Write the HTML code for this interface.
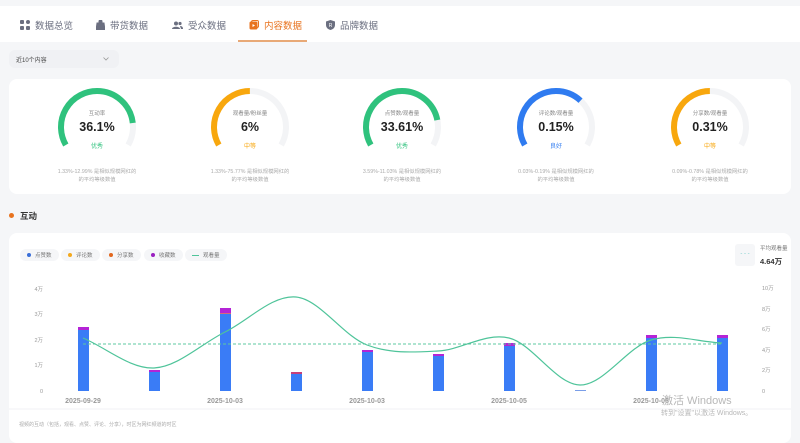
<!DOCTYPE html>
<html><head><meta charset="utf-8"><style>
*{margin:0;padding:0;box-sizing:border-box}
body{width:800px;height:435px;overflow:hidden;background:#f5f6f8;font-family:"Liberation Sans","Noto Sans CJK SC",sans-serif;position:relative;color:#333}
.abs{position:absolute}
.tabs{position:absolute;left:0;top:6px;width:800px;height:36px;background:#fff}
.tab{position:absolute;top:12px;font-size:9.5px;color:#6b6f80;display:flex;align-items:center;gap:5px}
.tab.on{color:#e8731f}
.card{position:absolute;background:#fff;border-radius:8px}
.g{position:absolute;width:120px;text-align:center}
.lbl{font-size:5.5px;color:#888}
.val{font-size:12.5px;font-weight:bold;color:#222;margin-top:3px}
.gr{font-size:6px;margin-top:7px}
.desc{position:absolute;width:140px;text-align:center;font-size:5.3px;color:#aaa;line-height:7.5px}
.leg{position:absolute;top:249px;height:12px;background:#f5f6f8;border-radius:6px;font-size:5.5px;color:#777;display:flex;align-items:center;padding:0 7px;gap:4px}
.dot{width:4px;height:4px;border-radius:50%}
</style></head><body>
<div class="tabs">
 <div class="tab" style="left:20px"><svg width="10" height="10" viewBox="0 0 10 10"><rect x="0" y="0" width="4" height="4" rx="1" fill="#6b6f80"/><rect x="6" y="0" width="4" height="4" rx="2" fill="#6b6f80"/><rect x="0" y="6" width="4" height="4" rx="1" fill="#6b6f80"/><rect x="6" y="6" width="4" height="4" rx="1" fill="#6b6f80"/></svg>数据总览</div>
 <div class="tab" style="left:96px"><svg width="9" height="10" viewBox="0 0 9 10"><path d="M1 3h7l1 7H0z M3 3V1.5a1.5 1.5 0 013 0V3" fill="#6b6f80" stroke="#6b6f80"/></svg>带货数据</div>
 <div class="tab" style="left:172px"><svg width="11" height="9" viewBox="0 0 11 9"><circle cx="4" cy="2.5" r="2" fill="#6b6f80"/><path d="M0 8c0-3 8-3 8 0z" fill="#6b6f80"/><circle cx="8" cy="2.5" r="1.6" fill="#6b6f80"/><path d="M8 5c2 0 3 1 3 3H9z" fill="#6b6f80"/></svg>受众数据</div>
 <div class="tab on" style="left:249px"><svg width="10" height="10" viewBox="0 0 10 10"><rect x="0.5" y="1.5" width="8" height="8" rx="1.5" fill="#e8731f"/><rect x="2.5" y="0.5" width="7" height="7" rx="1.5" fill="none" stroke="#e8731f"/><path d="M3.5 4v3l2.5-1.5z" fill="#fff"/></svg>内容数据</div>
 <div class="tab" style="left:326px"><svg width="9" height="10" viewBox="0 0 9 10"><path d="M4.5 0L9 1.5V5c0 3-2.5 4.5-4.5 5C2.5 9.5 0 8 0 5V1.5z" fill="#6b6f80"/><text x="4.5" y="7" font-size="5" fill="#fff" text-anchor="middle" font-family="Liberation Sans">R</text></svg>品牌数据</div>
 <div class="abs" style="left:238px;top:34px;width:69px;height:1.5px;background:#e8a977"></div>
</div>
<div class="abs" style="left:9px;top:50px;width:110px;height:18px;background:#f0f1f4;border-radius:6px;font-size:6px;color:#444;padding:5px 7px">近10个内容
<svg style="position:absolute;right:10px;top:7px" width="6" height="4" viewBox="0 0 6 4"><path d="M0.5 0.5L3 3l2.5-2.5" fill="none" stroke="#999" stroke-width="0.8"/></svg></div>

<div class="card" style="left:9px;top:79px;width:782px;height:115px"></div>
<svg class="abs" style="left:0;top:0" width="800" height="200">
 <g fill="none" stroke-width="6">
  <path d="M65.8 145 A36 36 0 1 1 128.2 145" stroke="#f3f4f6"/>
  <path d="M65.8 145 A36 36 0 1 1 128.2 145" stroke="#2fc27d" pathLength="100" stroke-dasharray="85 100"/>
  <path d="M218.8 145 A36 36 0 1 1 281.2 145" stroke="#f3f4f6"/>
  <path d="M218.8 145 A36 36 0 1 1 281.2 145" stroke="#f8a70d" pathLength="100" stroke-dasharray="50 100"/>
  <path d="M370.8 145 A36 36 0 1 1 433.2 145" stroke="#f3f4f6"/>
  <path d="M370.8 145 A36 36 0 1 1 433.2 145" stroke="#2fc27d" pathLength="100" stroke-dasharray="83 100"/>
  <path d="M524.8 145 A36 36 0 1 1 587.2 145" stroke="#f3f4f6"/>
  <path d="M524.8 145 A36 36 0 1 1 587.2 145" stroke="#2f7bf0" pathLength="100" stroke-dasharray="68 100"/>
  <path d="M678.8 145 A36 36 0 1 1 741.2 145" stroke="#f3f4f6"/>
  <path d="M678.8 145 A36 36 0 1 1 741.2 145" stroke="#f8a70d" pathLength="100" stroke-dasharray="50 100"/>
 </g>
</svg>
<div class="g" style="left:37px;top:109px"><div class="lbl">互动率</div><div class="val">36.1%</div><div class="gr" style="color:#2fc27d">优秀</div></div>
<div class="g" style="left:190px;top:109px"><div class="lbl">观看量/粉丝量</div><div class="val">6%</div><div class="gr" style="color:#f8a70d">中等</div></div>
<div class="g" style="left:342px;top:109px"><div class="lbl">点赞数/观看量</div><div class="val">33.61%</div><div class="gr" style="color:#2fc27d">优秀</div></div>
<div class="g" style="left:496px;top:109px"><div class="lbl">评论数/观看量</div><div class="val">0.15%</div><div class="gr" style="color:#2f7bf0">良好</div></div>
<div class="g" style="left:650px;top:109px"><div class="lbl">分享数/观看量</div><div class="val">0.31%</div><div class="gr" style="color:#f8a70d">中等</div></div>
<div class="desc" style="left:27px;top:169px">1.33%-12.99% 是相似规模网红的<br>的平均等级数值</div>
<div class="desc" style="left:180px;top:169px">1.33%-75.77% 是相似规模网红的<br>的平均等级数值</div>
<div class="desc" style="left:332px;top:169px">3.59%-11.03% 是相似规模网红的<br>的平均等级数值</div>
<div class="desc" style="left:486px;top:169px">0.03%-0.19% 是相似规模网红的<br>的平均等级数值</div>
<div class="desc" style="left:640px;top:169px">0.09%-0.78% 是相似规模网红的<br>的平均等级数值</div>

<div class="abs" style="left:9px;top:213px;width:5px;height:5px;border-radius:50%;background:#e8731f"></div>
<div class="abs" style="left:20px;top:210px;font-size:8.5px;font-weight:bold;color:#333">互动</div>

<div class="card" style="left:9px;top:233px;width:782px;height:210px"></div>
<div class="leg" style="left:20px"><span class="dot" style="background:#3a6fd8"></span>点赞数</div>
<div class="leg" style="left:61px"><span class="dot" style="background:#f3a81d"></span>评论数</div>
<div class="leg" style="left:102px"><span class="dot" style="background:#e2681f"></span>分享数</div>
<div class="leg" style="left:144px"><span class="dot" style="background:#9a20c0"></span>收藏数</div>
<div class="leg" style="left:185px"><span style="width:7px;height:1px;background:#4fc49a"></span>观看量</div>
<div class="abs" style="left:735px;top:244px;width:20px;height:22px;background:#f5f6f8;border-radius:3px;color:#7cc;font-size:6px;text-align:center;line-height:20px">- - -</div>
<div class="abs" style="left:760px;top:244px;font-size:5.5px;color:#777">平均观看量</div>
<div class="abs" style="left:760px;top:256px;font-size:7.5px;font-weight:bold;color:#333">4.64万</div>

<svg class="abs" style="left:0;top:0" width="800" height="435">
 <g font-size="5.5" fill="#999" font-family="Liberation Sans, Noto Sans CJK SC" text-anchor="end">
  <text x="43" y="291">4万</text><text x="43" y="316">3万</text><text x="43" y="342">2万</text><text x="43" y="367">1万</text><text x="43" y="393">0</text>
 </g>
 <g font-size="5.5" fill="#999" font-family="Liberation Sans, Noto Sans CJK SC">
  <text x="762" y="290">10万</text><text x="762" y="311">8万</text><text x="762" y="331">6万</text><text x="762" y="352">4万</text><text x="762" y="372">2万</text><text x="762" y="393">0</text>
 </g>
 <g>
  <rect x="78" y="330" width="11" height="61" fill="#3a7cf6"/><rect x="78" y="327" width="11" height="3" fill="#b424d6"/>
  <rect x="149" y="372" width="11" height="19" fill="#3a7cf6"/><rect x="149" y="370" width="11" height="2" fill="#b424d6"/>
  <rect x="220" y="314" width="11" height="77" fill="#3a7cf6"/><rect x="220" y="308" width="11" height="5" fill="#b424d6"/><rect x="220" y="313" width="11" height="1" fill="#d86a7a"/>
  <rect x="291" y="374" width="11" height="17" fill="#3a7cf6"/><rect x="291" y="372" width="11" height="2" fill="#c7407a"/>
  <rect x="362" y="352" width="11" height="39" fill="#3a7cf6"/><rect x="362" y="350" width="11" height="2" fill="#b424d6"/>
  <rect x="433" y="356" width="11" height="35" fill="#3a7cf6"/><rect x="433" y="354" width="11" height="2" fill="#b424d6"/>
  <rect x="504" y="346" width="11" height="45" fill="#3a7cf6"/><rect x="504" y="343" width="11" height="3" fill="#b424d6"/>
  <rect x="575" y="390" width="11" height="1" fill="#7a9ee8"/>
  <rect x="646" y="338" width="11" height="53" fill="#3a7cf6"/><rect x="646" y="335" width="11" height="3" fill="#b424d6"/>
  <rect x="717" y="338" width="11" height="53" fill="#3a7cf6"/><rect x="717" y="335" width="11" height="3" fill="#b424d6"/>
 </g>
 <line x1="83" y1="344" x2="722" y2="344" stroke="#5cc9a0" stroke-width="1" stroke-dasharray="3 2"/>
 <path d="M83 338 C106.7 348 130.3 369 154 368 C177.7 367 201.3 343.8 225 332 C248.7 320.2 272.3 294.8 296 297 C319.7 299.2 343.3 336 367 345 C390.7 354 414.3 352.2 438 351 C461.7 349.8 485.3 332.3 509 338 C532.7 343.7 556.3 384.7 580 385 C603.7 385.3 627.3 347 651 340 C674.7 333 698.3 342 722 343" fill="none" stroke="#4fc49a" stroke-width="1.2"/>
 <g font-size="7" fill="#999" font-weight="bold" font-family="Liberation Sans" text-anchor="middle">
  <text x="83" y="403">2025-09-29</text><text x="225" y="403">2025-10-03</text><text x="367" y="403">2025-10-03</text><text x="509" y="403">2025-10-05</text><text x="651" y="403">2025-10-06</text>
 </g>
 <line x1="9" y1="409" x2="791" y2="409" stroke="#f2f2f4"/>
</svg>
<div class="abs" style="left:19px;top:421px;font-size:5px;color:#aaa">视频的互动（包括，观看、点赞、评论、分享），时区为网红频道的时区</div>
<div class="abs" style="left:662px;top:392px;font-size:11px;color:#b8b8b8">激活 Windows</div>
<div class="abs" style="left:661px;top:408px;font-size:7px;color:#b8b8b8">转到"设置"以激活 Windows。</div>
</body></html>
